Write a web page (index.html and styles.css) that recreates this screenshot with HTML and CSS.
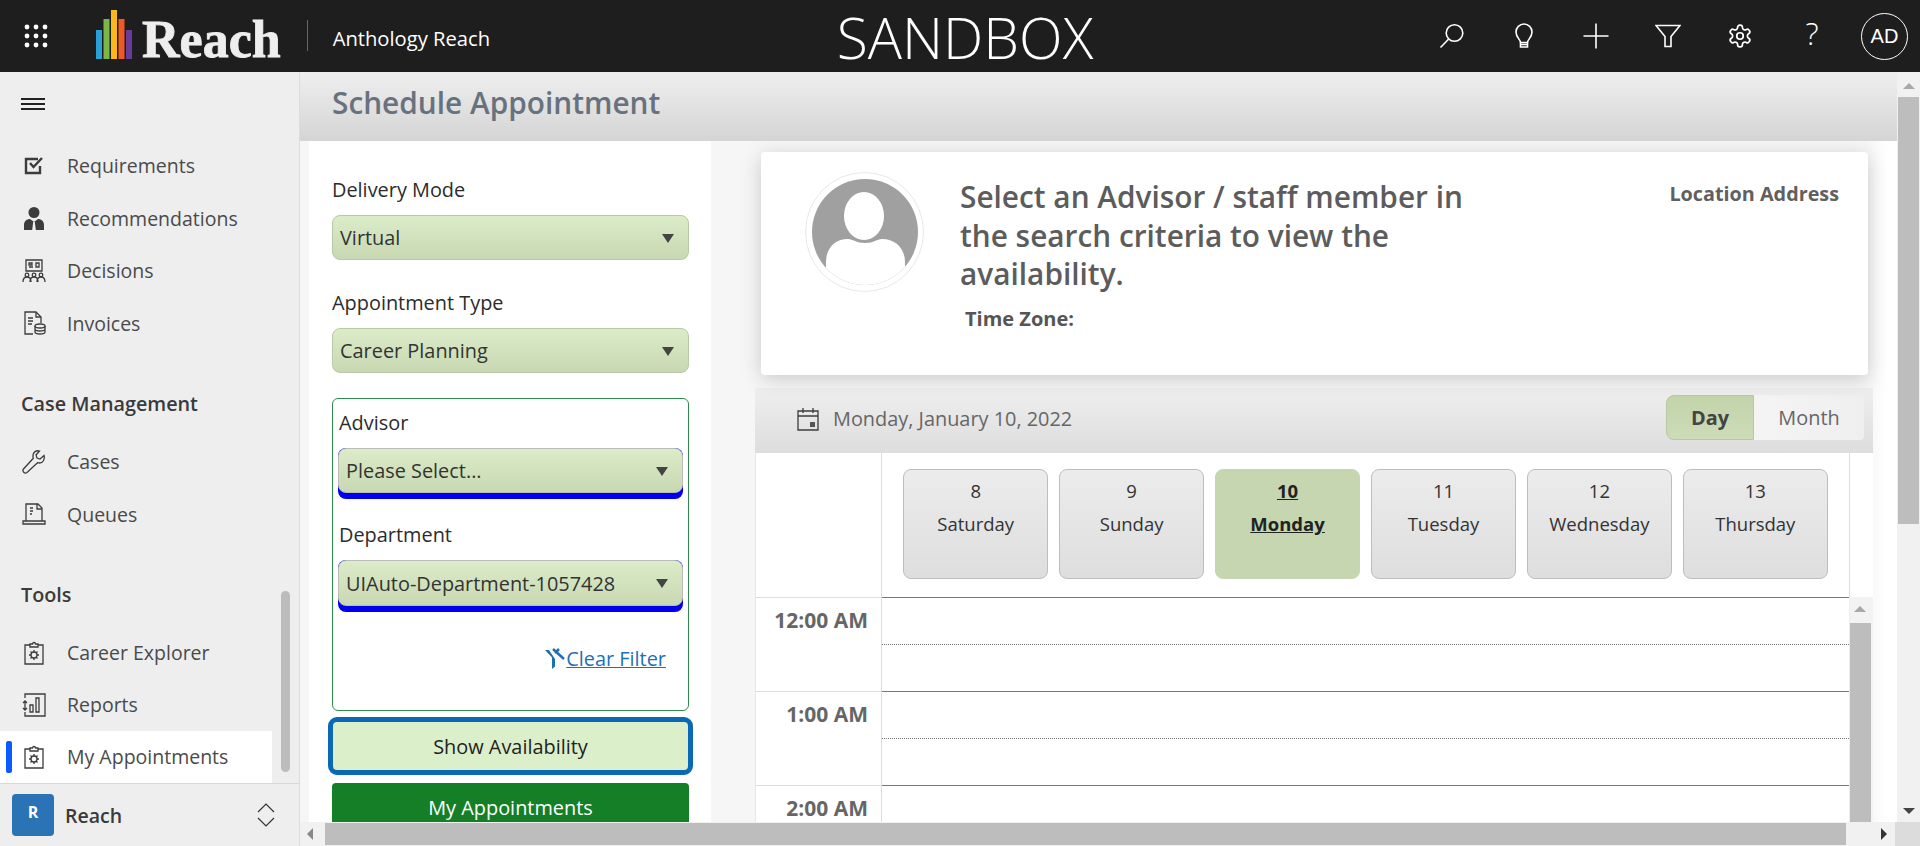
FILE: index.html
```html
<!DOCTYPE html>
<html lang="en">
<head>
<meta charset="utf-8">
<title>Schedule Appointment</title>
<link rel="stylesheet" href="styles.css">
</head>
<body>
<header class="topbar">
  <svg class="waffle" viewBox="0 0 24 24"><g fill="#fff"><circle cx="3" cy="3" r="2.4"/><circle cx="12" cy="3" r="2.4"/><circle cx="21" cy="3" r="2.4"/><circle cx="3" cy="12" r="2.4"/><circle cx="12" cy="12" r="2.4"/><circle cx="21" cy="12" r="2.4"/><circle cx="3" cy="21" r="2.4"/><circle cx="12" cy="21" r="2.4"/><circle cx="21" cy="21" r="2.4"/></g></svg>
  <svg class="logo-bars" viewBox="0 0 36 49"><rect x="0" y="20" width="6" height="29" fill="#2b9fd8"/><rect x="7.5" y="9" width="6" height="40" fill="#7ab648"/><rect x="15" y="0" width="6" height="49" fill="#fbb81c"/><rect x="22.5" y="9" width="6" height="40" fill="#ee5a24"/><rect x="30" y="20" width="6" height="29" fill="#6a3a9c"/></svg>
  <span class="logo-word">Reach</span>
  <span class="logo-rule"></span>
  <span class="app-name">Anthology Reach</span>
  <div class="env">SANDBOX</div>
  <nav class="top-icons">
    <svg class="top-icon" viewBox="0 0 26 26"><circle cx="15.5" cy="10" r="8.3"/><path d="M9.7 16 1.5 24.5"/></svg>
    <svg class="top-icon" viewBox="0 0 26 26"><path d="M9.5 19.5c0-3-4.500-5-4.500-10.500a8 8 0 0 1 16 0c0 5.500-4.500 7.500-4.500 10.500z"/><path d="M9.500 19.500v4.500h7v-4.500"/><path d="M9.500 21.500h7"/></svg>
    <svg class="top-icon" viewBox="0 0 26 26"><path d="M0.500 13h25M13 0.500v25"/></svg>
    <svg class="top-icon" viewBox="0 0 26 26"><path d="M1 2.500h24l-9 11v10h-6v-10z"/></svg>
    <svg class="top-icon" viewBox="0 0 24 24"><path d="M12.220 2h-.44a2 2 0 0 0-2 2v.18a2 2 0 0 1-1 1.730l-.43.25a2 2 0 0 1-2 0l-.15-.08a2 2 0 0 0-2.730.73l-.22.38a2 2 0 0 0 .73 2.730l.15.1a2 2 0 0 1 1 1.720v.51a2 2 0 0 1-1 1.740l-.15.09a2 2 0 0 0-.73 2.730l.22.38a2 2 0 0 0 2.730.73l.15-.08a2 2 0 0 1 2 0l.43.25a2 2 0 0 1 1 1.730V20a2 2 0 0 0 2 2h.44a2 2 0 0 0 2-2v-.18a2 2 0 0 1 1-1.730l.43-.25a2 2 0 0 1 2 0l.15.08a2 2 0 0 0 2.730-.73l.22-.39a2 2 0 0 0-.73-2.730l-.15-.08a2 2 0 0 1-1-1.740v-.5a2 2 0 0 1 1-1.740l.15-.09a2 2 0 0 0 .73-2.730l-.22-.38a2 2 0 0 0-2.730-.73l-.15.08a2 2 0 0 1-2 0l-.43-.25a2 2 0 0 1-1-1.730V4a2 2 0 0 0-2-2z"/><circle cx="12" cy="12" r="3"/></svg>
    <span class="help">?</span>
    <span class="avatar-btn">AD</span>
  </nav>
</header>

<div class="app">
  <aside class="sidebar">
    <div class="burger"><span></span><span></span><span></span></div>
    <ul class="nav">
      <li class="nav-item"><svg class="nav-icon" viewBox="0 0 24 24"><path class="ln2" d="M18 13v7H4V6h12"/><path class="ln2" d="m8 10 3.500 4L20 5"/></svg>Requirements</li>
      <li class="nav-item"><svg class="nav-icon" viewBox="0 0 24 24"><circle cx="12" cy="6.500" r="5.500" fill="#3c3c3c"/><path fill="#3c3c3c" d="M2 24v-5c0-4 3-6 6-6l4 3 4-3c3 0 6 2 6 6v5z"/><path fill="#eee" d="M11.200 16h1.600l1 8h-3.600z"/></svg>Recommendations</li>
      <li class="nav-item"><svg class="nav-icon" viewBox="0 0 24 24"><path class="ln" d="M4 1h16v11H4z"/><path class="ln" d="M7 4h3v2H7zM14 4h3v4h-3zM7 8h4"/><g class="ln"><circle cx="5" cy="16" r="1.800"/><circle cx="12" cy="16" r="1.800"/><circle cx="19" cy="16" r="1.800"/><path d="M1 23c0-3 1.500-5 4-5s4 2 4 5M8 23c0-3 1.500-5 4-5s4 2 4 5M15 23c0-3 1.500-5 4-5s4 2 4 5"/></g></svg>Decisions</li>
      <li class="nav-item"><svg class="nav-icon" viewBox="0 0 24 24"><path class="ln" d="M11 23H3V1h11l5 5v6"/><path class="ln" d="M14 1v5h5M6 7h5M6 10h5M6 13h4"/><ellipse class="ln" cx="18" cy="15" rx="5" ry="2"/><path class="ln" d="M13 15v6c0 1 2 2 5 2s5-1 5-2v-6M13 18c0 1 2 2 5 2s5-1 5-2"/></svg>Invoices</li>
    </ul>
    <h3 class="nav-head nav-head--case">Case Management</h3>
    <ul class="nav nav--case">
      <li class="nav-item"><svg class="nav-icon" viewBox="0 0 24 24"><path class="ln" d="M22 5.500 18 9l-3-1-1-3 3.500-4c-3.500-1-7 1.500-6.500 5.500 0 1 .3 1.800.3 1.800L1.500 19a2.500 2.500 0 0 0 3.500 3.500l10.500-9.800s1 .3 2 .3c3.500 0 5.500-3.500 4.500-7.500z"/></svg>Cases</li>
      <li class="nav-item"><svg class="nav-icon" viewBox="0 0 24 24"><path class="ln" d="M4 19V2h12l4 4v13"/><path class="ln" d="M15 2v5h5M8 6h3M8 9h3M8 12h2"/><path class="ln" d="M1 19h22v3H1z"/></svg>Queues</li>
    </ul>
    <h3 class="nav-head nav-head--tools">Tools</h3>
    <ul class="nav nav--tools">
      <li class="nav-item"><svg class="nav-icon" viewBox="0 0 24 24"><path class="ln" d="M8 4H3v19h18V4h-5"/><path class="ln" d="M8 6V3h2.500a1.500 1.500 0 0 1 3 0H16v3z"/><circle class="ln" cx="12" cy="14" r="3"/><path class="ln" d="M12 9v2M12 17v2M7 14h2M15 14h2M8.500 10.500 10 12M14 16l1.500 1.500M15.500 10.500 14 12M10 16l-1.500 1.500"/></svg>Career Explorer</li>
      <li class="nav-item"><svg class="nav-icon" viewBox="0 0 24 24"><path class="ln" d="M3 5V1h20v22H3v-4"/><path class="ln" d="M3 8v9M1 10l2-2 2 2M1 15l2 2 2-2"/><path class="ln" d="M8 12h3v7H8zM14 5h3v14h-3z"/></svg>Reports</li>
      <li class="nav-item nav-item--active"><svg class="nav-icon" viewBox="0 0 24 24"><path class="ln" d="M8 4H3v19h18V4h-5"/><path class="ln" d="M8 6V3h2.500a1.500 1.500 0 0 1 3 0H16v3z"/><circle class="ln" cx="12" cy="14" r="3"/><path class="ln" d="M12 9v2M12 17v2M7 14h2M15 14h2M8.500 10.500 10 12M14 16l1.500 1.500M15.500 10.500 14 12M10 16l-1.500 1.500"/></svg>My Appointments</li>
    </ul>
    <div class="side-thumb"></div>
    <div class="side-foot">
      <span class="tile">R</span>
      <span class="foot-name">Reach</span>
      <svg class="foot-chev" viewBox="0 0 18 26"><path d="M1 10 9 2l8 8M1 16l8 8 8-8"/></svg>
    </div>
  </aside>

  <div class="main">
    <div class="main-row">
      <div class="page">
        <div class="page-title"><h1>Schedule Appointment</h1></div>
        <div class="page-body">
          <section class="filters">
            <label class="f-label">Delivery Mode</label>
            <div class="select">Virtual<i class="caret"></i></div>
            <label class="f-label f-label--next">Appointment Type</label>
            <div class="select">Career Planning<i class="caret"></i></div>
            <div class="group">
              <label class="g-label">Advisor</label>
              <div class="req"><div class="select select--in">Please Select...<i class="caret"></i></div></div>
              <label class="g-label g-label--next">Department</label>
              <div class="req"><div class="select select--in select--tall">UIAuto-Department-1057428<i class="caret"></i></div></div>
              <div class="clear-row">
                <svg class="clear-icon" viewBox="0 0 22 22"><path d="M1 2 8 9.500V21l3-2.500V11L5 2z" fill="#1f6fb5"/><path d="M9 1l11 10M15 1l-4 4" stroke="#1f6fb5" stroke-width="2.500" fill="none"/></svg>
                <a class="clear-link">Clear Filter</a>
              </div>
            </div>
            <button class="btn-show">Show Availability</button>
            <button class="btn-mine">My Appointments</button>
          </section>

          <section class="right">
            <div class="card">
              <svg class="portrait" viewBox="0 0 119 120">
                <ellipse cx="59.500" cy="60" rx="59" ry="59.500" fill="#fff" stroke="#e8e8e8"/>
                <clipPath id="pc"><ellipse cx="60" cy="60" rx="53" ry="53"/></clipPath>
                <g clip-path="url(#pc)">
                  <rect width="119" height="120" fill="#a0a0a0"/>
                  <ellipse cx="59" cy="44" rx="20" ry="24" fill="#fff"/>
                  <path d="M21 120V90c0-13 8-23 22-23 5 0 8 4 17 4s12-4 17-4c14 0 23 10 23 23v30z" fill="#fff"/>
                  <rect y="96" width="21" height="24" fill="#fff"/>
                  <rect x="100" y="96" width="19" height="24" fill="#fff"/>
                </g>
              </svg>
              <div class="card-text">
                <h2>Select an Advisor / staff member in the search criteria to view the availability.</h2>
                <div class="tz">Time Zone:</div>
              </div>
              <div class="loc">Location Address</div>
            </div>

            <div class="cal">
              <div class="cal-bar">
                <svg class="cal-icon" viewBox="0 0 22 24"><path class="ln" d="M1 4h20v19H1zM1 9h20M6 1v5M16 1v5"/><rect x="13" y="15" width="5" height="5" fill="#555"/></svg>
                <span class="cal-date">Monday, January 10, 2022</span>
                <div class="toggle"><span class="tg tg--day">Day</span><span class="tg tg--month">Month</span></div>
              </div>
              <div class="cal-head">
                <div class="corner"></div>
                <div class="days">
                  <div class="day"><span>8</span><span>Saturday</span></div>
                  <div class="day"><span>9</span><span>Sunday</span></div>
                  <div class="day day--on"><span>10</span><span>Monday</span></div>
                  <div class="day"><span>11</span><span>Tuesday</span></div>
                  <div class="day"><span>12</span><span>Wednesday</span></div>
                  <div class="day"><span>13</span><span>Thursday</span></div>
                </div>
                <div class="head-gap"></div>
              </div>
              <div class="cal-grid">
                <div class="hours">
                  <div class="hour"><div class="time">12:00 AM</div><div class="slots"><div class="slot"></div><div class="slot"></div></div></div>
                  <div class="hour"><div class="time">1:00 AM</div><div class="slots"><div class="slot"></div><div class="slot"></div></div></div>
                  <div class="hour"><div class="time">2:00 AM</div><div class="slots"><div class="slot"></div><div class="slot"></div></div></div>
                </div>
                <div class="vbar vbar--in">
                  <i class="arr arr--up"></i>
                  <div class="thumb"></div>
                </div>
              </div>
            </div>
          </section>
        </div>
      </div>
      <div class="vbar vbar--out">
        <i class="arr arr--up"></i>
        <div class="thumb"></div>
        <div class="grow"></div>
        <i class="arr arr--down"></i>
      </div>
    </div>
    <div class="hbar">
      <i class="arr arr--left"></i>
      <div class="hthumb"></div>
      <i class="arr arr--right"></i>
      <div class="hcorner"></div>
    </div>
  </div>
</div>
</body>
</html>
```

FILE: styles.css
```css
* { box-sizing: border-box; }
html, body { margin: 0; height: 846px; overflow: hidden; }
body {
  display: flex; flex-direction: column;
  font-family: "Open Sans", "Noto Sans", sans-serif;
  font-size: 19.9px; color: #333; background: #f5f5f5;
}
ul { list-style: none; margin: 0; padding: 0; }
h1, h2, h3 { margin: 0; }

.topbar { position: relative; height: 72px; flex: none; background: #1e1e1e; display: flex; align-items: center; color: #fff; }
.waffle { width: 24px; height: 24px; margin-left: 24px; }
.logo-bars { width: 36px; height: 49px; margin-left: 48px; margin-top: -4px; }
.logo-word { font: bold 52px "Liberation Serif", serif; color: #eee; margin-left: 10px; margin-top: 6px; -webkit-text-stroke: .8px #eee; }
.logo-rule { width: 1px; height: 31px; background: #666; margin-left: 26px; margin-top: -2px; }
.app-name { font-size: 20.2px; margin-left: 25px; margin-top: 3px; }
.env { position: absolute; left: 0; right: 0; top: 0; text-align: center; font-size: 57px; font-weight: 300; line-height: 74px; padding-left: 10px; }
.top-icons { margin-left: auto; display: flex; align-items: center; padding-right: 12px; position: relative; }
.top-icon { width: 26px; height: 26px; fill: none; stroke: #fff; stroke-width: 1.6; margin-right: 46px; flex: none; }
.help { font-size: 31px; font-weight: 300; width: 26px; text-align: center; margin-right: 36px; line-height: 1; margin-top: -6px; }
.avatar-btn { width: 47px; height: 47px; border: 1.5px solid #fff; border-radius: 50%; display: flex; align-items: center; justify-content: center; font: 20px "Liberation Sans", sans-serif; }

.app { flex: 1; display: flex; min-height: 0; }
.sidebar { position: relative; width: 300px; flex: none; background: #eee; border-right: 1px solid #ddd; display: flex; flex-direction: column; font-size: 19.5px; }
.burger { height: 67px; padding: 26px 0 0 21px; flex: none; }
.burger span { display: block; width: 24px; height: 1.5px; background: #222; margin-bottom: 3.5px; }
.nav-item { height: 52.7px; display: flex; align-items: center; padding-left: 22px; color: #4a4a4a; position: relative; }
.nav--case .nav-item { height: 52.4px; }
.nav--tools .nav-item { height: 52px; }
.nav-icon { width: 24px; height: 24px; margin-right: 21px; flex: none; }
.ln { fill: none; stroke: #3c3c3c; stroke-width: 1.3; }
.ln2 { fill: none; stroke: #3c3c3c; stroke-width: 2.4; }
.nav-head { font-size: 19.8px; font-weight: 600; color: #3a3a3a; padding-left: 21px; height: 40px; line-height: 40px; }
.nav-head--case { margin-top: 34px; margin-bottom: 12px; }
.nav-head--tools { margin-top: 34px; margin-bottom: 12px; }
.nav-item--active { background: #fff; width: 272px; }
.nav-item--active::before { content: ""; position: absolute; left: 6px; top: 10px; bottom: 10px; width: 6px; border-radius: 2px; background: #0a5cff; }
.side-thumb { position: absolute; left: 281px; top: 519px; width: 9px; height: 181px; border-radius: 5px; background: #bcbcbc; }
.side-foot { margin-top: auto; height: 63px; border-top: 1px solid #d8d8d8; display: flex; align-items: center; padding-left: 12px; }
.tile { width: 42px; height: 42px; border-radius: 4px; background: #2a73b5; color: #fff; font-weight: 700; font-size: 16px; display: flex; align-items: center; justify-content: center; padding-bottom: 6px; }
.foot-name { font-weight: 600; font-size: 19.5px; margin-left: 11px; color: #3a3a3a; }
.foot-chev { width: 18px; height: 26px; margin-left: auto; margin-right: 24px; fill: none; stroke: #333; stroke-width: 1.2; }

.main { flex: 1; min-width: 0; display: flex; flex-direction: column; }
.main-row { flex: 1; min-height: 0; display: flex; }
.page { flex: 1; min-width: 0; display: flex; flex-direction: column; overflow: hidden; }
.page-title { height: 69px; flex: none; background: linear-gradient(#efefef, #d4d4d4); padding-left: 32px; }
.page-title h1 { font-size: 29.8px; font-weight: 600; color: #68727e; line-height: 62px; }
.page-body { flex: 1; min-height: 0; display: flex; overflow: hidden; padding-left: 9px; background: #f6f6f6; }

.filters { width: 402px; flex: none; background: #fff; padding: 35px 22px 0 23px; display: flex; flex-direction: column; overflow: hidden; }
.f-label { height: 28px; line-height: 28px; color: #2c2c2c; margin-bottom: 11px; }
.f-label--next { margin-top: 29px; }
.select { position: relative; height: 45px; flex: none; border: 1px solid #b9c9a6; border-radius: 8px; background: linear-gradient(#dcecc9, #c7d8b2); display: flex; align-items: center; padding-left: 7px; color: #333; }
.select--in { height: 45px; border-color: #bbb; }
.select--tall { height: 46px; }
.caret { position: absolute; right: 14px; top: 50%; margin-top: -4px; border: 6.5px solid transparent; border-top: 9px solid #444; border-bottom: 0; }
.group { height: 313px; flex: none; margin-top: 25px; border: 1px solid #2e8b4e; border-radius: 6px; padding: 5.5px 5px 0 5px; display: flex; flex-direction: column; }
.g-label { height: 36px; line-height: 36px; color: #2c2c2c; padding-left: 1px; }
.g-label--next { margin-top: 18px; margin-bottom: 3px; }
.g-label + .req { margin-top: 7.5px; }
.g-label--next + .req { margin-top: 4px; }
.req { background: #0000ee; border-radius: 8px; padding-bottom: 6px; flex: none; }
.clear-row { display: flex; justify-content: flex-end; align-items: center; margin-top: 33px; padding-right: 17px; }
.clear-icon { width: 22px; height: 22px; }
.clear-link { color: #1f6fb5; text-decoration: underline; }
.btn-show, .btn-mine { font: inherit; flex: none; display: block; }
.btn-show { height: 58px; width: 365px; margin: 6px 0 0 -4px; background: #dcefcb; border: 5px solid #0a69b4; border-radius: 9px; color: #222; }
.btn-mine { height: 48px; width: 357px; margin-top: 8px; background: #147f27; border: 0; border-radius: 4px; color: #fff; }

.right { flex: 1; min-width: 0; display: flex; flex-direction: column; padding: 11px 0 0 44px; background: linear-gradient(90deg,#f6f6f6,#f6f6f6 calc(100% - 30px),#fff calc(100% - 10px)); }
.card { height: 223px; flex: none; margin: 0 26px 0 6px; width: 1107px; background: #fff; border-radius: 4px; box-shadow: 0 4px 20px rgba(0,0,0,.18); display: flex; position: relative; }
.portrait { width: 119px; height: 120px; margin: 20px 0 0 44px; flex: none; }
.card-text { width: 525px; margin-left: 36px; padding-top: 26px; }
.card-text h2 { font-size: 29.8px; font-weight: 600; color: #5c5c5c; line-height: 38.5px; }
.tz { font-size: 20px; font-weight: 700; color: #555; margin: 11px 0 0 5px; }
.loc { margin-left: auto; padding: 28px 29px 0 0; font-weight: 700; font-size: 19.8px; color: #606060; }

.cal { flex: 1; min-height: 0; width: 1118px; margin-top: 13px; display: flex; flex-direction: column; background: #fff; }
.cal-bar { height: 65px; flex: none; background: linear-gradient(#efefef, #dddddd); display: flex; align-items: center; padding: 0 0 4px 42px; }
.cal-icon { width: 22px; height: 24px; margin-right: 14px; }
.cal-date { color: #666; }
.toggle { margin-left: auto; margin-right: 9px; display: flex; height: 45px; margin-top: -2px; }
.tg { display: flex; align-items: center; justify-content: center; }
.tg--day { width: 88px; background: linear-gradient(#c3d4ab, #cbdcb7); border-radius: 8px 0 0 8px; font-weight: 700; color: #444; border: 1px solid #b7c8a2; }
.tg--month { width: 110px; background: linear-gradient(90deg,#f4f4f4,#efefef); color: #666; border-radius: 0 4px 4px 0; }
.cal-head { height: 144px; flex: none; display: flex; }
.corner { width: 127px; flex: none; border-right: 1px solid #ddd; border-left: 1px solid #e6e6e6; }
.days { flex: 1; display: flex; gap: 10.500px; padding: 16px 21px 0 21px; }
.day { flex: 1; height: 110px; border: 1px solid #bdbdbd; border-radius: 8px; background: linear-gradient(#ececec, #dedede); display: flex; flex-direction: column; align-items: center; padding-top: 4px; line-height: 33px; color: #333; font-size: 18.5px; }
.day--on { background: #c5d6b1; border-color: #c5d6b1; font-weight: 700; color: #222; text-decoration: underline; }
.head-gap { width: 24px; flex: none; border-left: 1px solid #ddd; }
.cal-grid { flex: 1; min-height: 0; display: flex; overflow: hidden; }
.hours { flex: 1; min-width: 0; overflow: hidden; }
.hour { display: flex; height: 94px; }
.time { width: 127px; flex: none; border-right: 1px solid #ddd; border-left: 1px solid #e6e6e6; border-top: 1px solid #ddd; text-align: right; padding: 8px 13px 0 0; font-weight: 700; font-size: 21px; color: #666; }
.slots { flex: 1; min-width: 0; }
.slot { height: 47px; }
.slot:first-child { border-top: 1.5px solid #777; }
.slot:last-child { border-top: 1px dotted #777; }

.vbar { flex: none; display: flex; flex-direction: column; align-items: center; }
.vbar--in { width: 24px; background: #f3f3f3; padding-right: 3px; border-left: 1px solid #eee; }
.vbar--in .arr--up { margin: 9px 0 11px; }
.vbar--in .thumb { width: 21px; flex: 1; background: #bdbdbd; }
.vbar--out { width: 23px; background: #f1f1f1; padding: 0 0 8px; }
.vbar--out .arr--up { margin: 11px 0 8px; }
.vbar--out .thumb { width: 21px; height: 427px; background: #bdbdbd; }
.grow { flex: 1; }
.arr { display: block; border: 6px solid transparent; flex: none; width: 0; height: 0; }
.arr--up { border-top: 0; border-bottom: 6px solid #a8a8a8; }
.arr--down { border-bottom: 0; border-top: 6px solid #444; }
.arr--left { border-left: 0; border-right: 6px solid #888; margin: 0 12px 0 7px; }
.arr--right { border-right: 0; border-left: 6px solid #333; margin: 0 8px 0 35px; }
.hbar { height: 24px; flex: none; display: flex; align-items: center; background: #f1f1f1; }
.hthumb { flex: 1; height: 22px; background: #bdbdbd; }
.hcorner { width: 25px; height: 24px; background: #dcdcdc; }
```
